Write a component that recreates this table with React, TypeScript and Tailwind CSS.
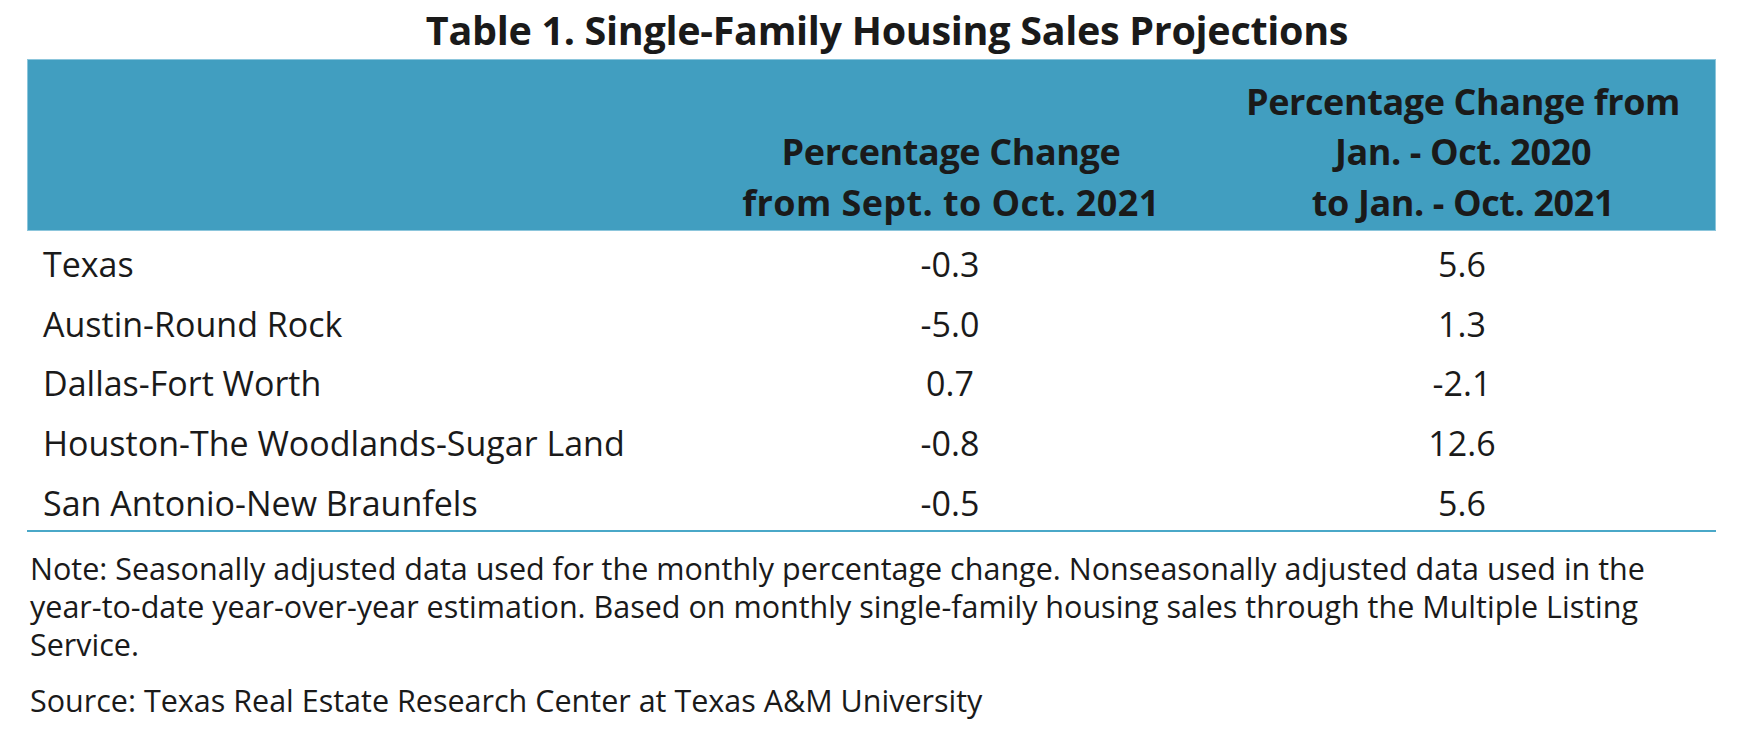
import React from "react";

const rows = [
  { name: "Texas", month: "-0.3", ytd: "5.6" },
  { name: "Austin-Round Rock", month: "-5.0", ytd: "1.3" },
  { name: "Dallas-Fort Worth", month: "0.7", ytd: "-2.1" },
  { name: "Houston-The Woodlands-Sugar Land", month: "-0.8", ytd: "12.6" },
  { name: "San Antonio-New Braunfels", month: "-0.5", ytd: "5.6" },
];

const cols = "grid grid-cols-[665px_516px_508px]";

export default function App() {
  return (
    <div className="w-[1760px] h-[737px] bg-white text-[#1a1a1a] font-['Open_Sans',sans-serif] overflow-hidden">
      <h1 className="h-[59px] pt-[2px] text-center text-[39.5px] leading-[56px] font-bold tracking-[-0.3px] pl-[14px]">
        Table 1. Single-Family Housing Sales Projections
      </h1>

      <div className="ml-[27px] w-[1689px]">
        {/* header band */}
        <div className={`${cols} h-[172px] bg-[#419ec0] border border-[#8cc6dc] font-bold text-[36px] leading-[50.5px] tracking-[-0.4px]`}>
          <div />
          <div className="flex flex-col items-center justify-end pb-[2px] text-center">
            <span>Percentage Change</span>
            <span className="tracking-[0.4px]">from Sept. to Oct. 2021</span>
          </div>
          <div className="flex flex-col items-center justify-end pb-[2px] text-center">
            <span>Percentage Change from</span>
            <span>Jan. - Oct. 2020</span>
            <span>to Jan. - Oct. 2021</span>
          </div>
        </div>

        {/* rows */}
        <div className="border-b-2 border-[#4aa8c8] text-[34px]">
          {rows.map((r) => (
            <div key={r.name} className={`${cols} h-[59.8px] items-center pt-[7px]`}>
              <div className="pl-[16px]">{r.name}</div>
              <div className="text-center">{r.month}</div>
              <div className="text-center">{r.ytd}</div>
            </div>
          ))}
        </div>

        {/* notes */}
        <div className="pt-[17px] text-[30.5px] leading-[38px] pl-[3px] tracking-[0px]">
          <p className="whitespace-nowrap">
            Note: Seasonally adjusted data used for the monthly percentage change. Nonseasonally adjusted data used in the
            <br />
            year-to-date year-over-year estimation. Based on monthly single-family housing sales through the Multiple Listing
            <br />
            Service.
          </p>
          <p className="mt-[18px]">Source: Texas Real Estate Research Center at Texas A&amp;M University</p>
        </div>
      </div>
    </div>
  );
}
